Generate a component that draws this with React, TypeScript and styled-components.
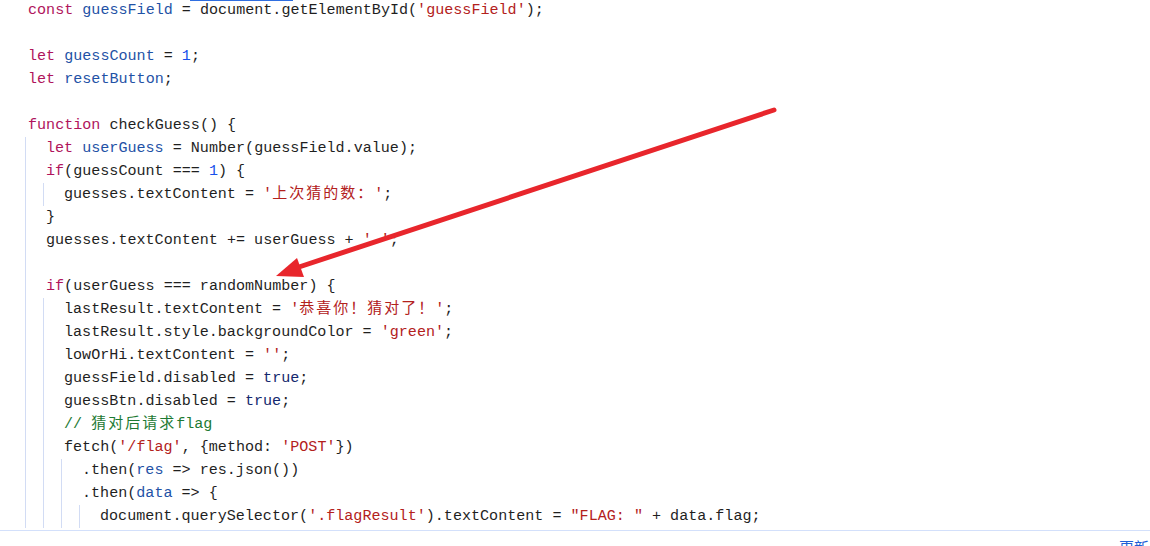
import React from "react";
import styled, { createGlobalStyle } from "styled-components";

const Global = createGlobalStyle`
  html, body { margin: 0; padding: 0; background: #ffffff; }
  body { width: 1150px; height: 546px; overflow: hidden; }
`;

type Kind = "p" | "k" | "v" | "n" | "s" | "c" | "t";
type Tok = [Kind, string];
type LineDef = { indent: number; toks: Tok[] };

const colors: Record<Kind, string> = {
  p: "#1f1f1f",
  k: "#b0145c",
  v: "#1f52a6",
  n: "#1750eb",
  s: "#b3211c",
  c: "#1d7a33",
  t: "#14286e",
};

const lines: LineDef[] = [
  { indent: 0, toks: [["k", "const"], ["p", " "], ["v", "guessField"], ["p", " = document.getElementById("], ["s", "'guessField'"], ["p", ");"]] },
  { indent: 0, toks: [] },
  { indent: 0, toks: [["k", "let"], ["p", " "], ["v", "guessCount"], ["p", " = "], ["n", "1"], ["p", ";"]] },
  { indent: 0, toks: [["k", "let"], ["p", " "], ["v", "resetButton"], ["p", ";"]] },
  { indent: 0, toks: [] },
  { indent: 0, toks: [["k", "function"], ["p", " checkGuess() {"]] },
  { indent: 1, toks: [["k", "let"], ["p", " "], ["v", "userGuess"], ["p", " = Number(guessField.value);"]] },
  { indent: 1, toks: [["k", "if"], ["p", "(guessCount === "], ["n", "1"], ["p", ") {"]] },
  { indent: 2, toks: [["p", "guesses.textContent = "], ["s", "'上次猜的数：'"], ["p", ";"]] },
  { indent: 1, toks: [["p", "}"]] },
  { indent: 1, toks: [["p", "guesses.textContent += userGuess + "], ["s", "' '"], ["p", ";"]] },
  { indent: 1, toks: [] },
  { indent: 1, toks: [["k", "if"], ["p", "(userGuess === randomNumber) {"]] },
  { indent: 2, toks: [["p", "lastResult.textContent = "], ["s", "'恭喜你！猜对了！'"], ["p", ";"]] },
  { indent: 2, toks: [["p", "lastResult.style.backgroundColor = "], ["s", "'green'"], ["p", ";"]] },
  { indent: 2, toks: [["p", "lowOrHi.textContent = "], ["s", "''"], ["p", ";"]] },
  { indent: 2, toks: [["p", "guessField.disabled = "], ["t", "true"], ["p", ";"]] },
  { indent: 2, toks: [["p", "guessBtn.disabled = "], ["t", "true"], ["p", ";"]] },
  { indent: 2, toks: [["c", "// 猜对后请求flag"]] },
  { indent: 2, toks: [["p", "fetch("], ["s", "'/flag'"], ["p", ", {method: "], ["s", "'POST'"], ["p", "})"]] },
  { indent: 3, toks: [["p", ".then("], ["v", "res"], ["p", " => res.json())"]] },
  { indent: 3, toks: [["p", ".then("], ["v", "data"], ["p", " => {"]] },
  { indent: 4, toks: [["p", "document.querySelector("], ["s", "'.flagResult'"], ["p", ").textContent = "], ["s", "\"FLAG: \""], ["p", " + data.flag;"]] },
];

const Page = styled.div`
  position: relative;
  width: 1150px;
  height: 546px;
  overflow: hidden;
  background: #ffffff;
`;

const Editor = styled.div`
  display: flex;
  flex-direction: column;
  margin-top: -1.5px;
  padding-bottom: 2.5px;
  border-bottom: 1px solid #d3e0fb;
`;

const Line = styled.div`
  display: flex;
  align-items: stretch;
  height: 23px;
  padding-left: 25px;
  font-family: "Liberation Mono", "DejaVu Sans Mono", monospace;
  font-size: 15.08px;
  line-height: 23px;
  white-space: pre;
  color: #1f1f1f;
`;

const Guide = styled.span`
  flex: 0 0 18px;
  box-sizing: border-box;
  border-left: 1px solid #d2dcf4;
`;

const Text = styled.span`
  padding-left: 3px;
  line-height: 23px;
`;

const Tk = styled.span<{ $kind: Kind }>`
  color: ${(p) => colors[p.$kind]};
`;

const Cjk = styled.span`
  font-family: "Noto Sans CJK SC", "Noto Sans CJK JP", sans-serif;
  font-size: 15px;
  line-height: 0;
  letter-spacing: 2px;
`;

const Footer = styled.div`
  display: flex;
  justify-content: flex-end;
  padding-top: 5px;
`;

const UpdateLink = styled.span`
  font-family: "Noto Sans CJK SC", "Noto Sans CJK JP", sans-serif;
  font-size: 15px;
  line-height: 22px;
  color: #1f5fd6;
  width: 31px;
  white-space: nowrap;
`;

const TopMark = styled.div`
  position: absolute;
  top: 0;
  left: 190px;
  width: 103px;
  height: 1px;
  background: #2f6ee0;
`;

const Overlay = styled.svg`
  position: absolute;
  left: 0;
  top: 0;
  pointer-events: none;
`;

const cjkRe = /([\u3000-\u303f\u4e00-\u9fff\uff00-\uffef]+)/;

function renderText(text: string) {
  const parts = text.split(cjkRe);
  return parts.map((part, i) =>
    i % 2 === 1 ? <Cjk key={i}>{part}</Cjk> : <React.Fragment key={i}>{part}</React.Fragment>
  );
}

export default function App() {
  return (
    <>
      <Global />
      <Page>
        <Editor>
          {lines.map((ln, i) => (
            <Line key={i}>
              {Array.from({ length: ln.indent }).map((_, g) => (
                <Guide key={g} />
              ))}
              <Text>
                {ln.toks.map(([kind, t], j) => (
                  <Tk key={j} $kind={kind}>
                    {renderText(t)}
                  </Tk>
                ))}
              </Text>
            </Line>
          ))}
        </Editor>
        <Footer>
          <UpdateLink>更新</UpdateLink>
        </Footer>
        <TopMark />
        <Overlay width={1150} height={546} viewBox="0 0 1150 546">
          <line x1={774} y1={110} x2={296} y2={268} stroke="#e8262c" strokeWidth={5} strokeLinecap="round" />
          <polygon points="276,276 297,258 304,277" fill="#e8262c" />
        </Overlay>
      </Page>
    </>
  );
}
